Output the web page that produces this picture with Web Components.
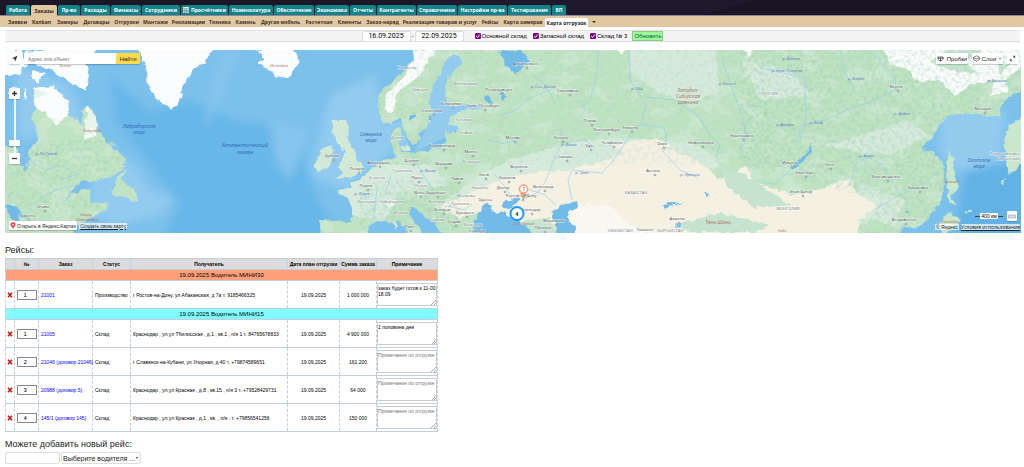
<!DOCTYPE html>
<html lang="ru">
<head>
<meta charset="utf-8">
<title>Карта отгрузок</title>
<style>
html,body{margin:0;background:#fff}
body{font-family:"Liberation Sans",Arial,sans-serif;color:#000}
</style>
</head>
<body>
<shipping-page></shipping-page>
<script>
const define=(name,html,setup)=>{
  const t=document.createElement('template');
  t.innerHTML=html;
  customElements.define(name,class extends HTMLElement{
    connectedCallback(){
      if(this.shadowRoot)return;
      const r=this.attachShadow({mode:'open'});
      r.append(t.content.cloneNode(true));
      if(setup)setup(r,this);
    }
  });
};

/* Main section tabs */
define('main-tabs',`<style>
:host{display:block;background:linear-gradient(165deg,#1c1626 0 40%,#20182d 40% 70%,#1b1424 70%);border-bottom:1px solid #8e8496}
nav{display:flex;gap:1px;padding:5px 6px 0}
a{display:flex;align-items:center;justify-content:center;gap:2px;box-sizing:border-box;height:10px;width:var(--w);border-radius:2px 2px 0 0;background:#108488;color:#fff;font:bold 5px "Open Sans",sans-serif;text-decoration:none;white-space:nowrap}
a.on{background:#e0c8a2;color:#33261c;height:11px;margin-bottom:-1px}
svg{width:6px;height:6px}
</style><nav aria-label="Разделы"></nav>`,r=>{
  const tabs=[['Работа',24],['Заказы',26],['Пр-во',22],['Расходы',29],['Финансы',30],['Сотрудники',38],['Просчётники',47],['Номенклатура',44],['Обеспечение',40],['Экономика',34],['Отчеты',26],['Контрагенты',39],['Справочники',40],['Настройки пр-ва',49],['Тестирование',43],['БП',14]];
  r.querySelector('nav').innerHTML=tabs.map(([t,w],i)=>`<a href="#" style="--w:${w}px" class="${i==1?'on':''}">${i==6?'<svg viewBox="0 0 6 6"><path fill="#dfe9ea" d="M0 0h6v6H0z"/><path stroke="#4d7f84" stroke-width=".5" d="M0 1.7h6M1.8 2v4M3.6 2v4M0 3.5h6M0 4.8h6"/></svg>':''}${t}</a>`).join('');
});

/* Second-level menu */
define('sub-menu',`<style>
:host{display:block;background:#e0c8a2}
nav{display:flex;align-items:center;height:11px;padding:0 6px}
a{display:flex;align-items:center;justify-content:center;box-sizing:border-box;width:var(--w);height:9px;color:#40301f;font:bold 5px "Open Sans",sans-serif;text-decoration:none;white-space:nowrap}
a.on{background:#fff;color:#222;border-radius:2px 2px 0 0;align-self:flex-end}
button{border:0;padding:0;background:none;width:12px;height:9px;display:flex;justify-content:center;align-items:center}
i{border:2px solid transparent;border-top-color:#40301f;border-bottom:0}
</style><nav aria-label="Заказы"></nav>`,r=>{
  const items=[['Заявки',23],['Kanban',25],['Замеры',27],['Договоры',31],['Отгрузки',29],['Монтажи',29],['Рекламации',37],['Техника',26],['Камень',25],['Другая мебель',45],['Расчетная',32],['Клиенты',29],['Заказ-наряд',37],['Реализация товаров и услуг',78],['Рейсы',22],['Карта замеров',44],['Карта отгрузок',43]];
  r.querySelector('nav').innerHTML=items.map(([t,w],i)=>`<a href="#" style="--w:${w}px" class="${i==16?'on':''}">${t}</a>`).join('')+'<button aria-label="Ещё"><i></i></button>';
});

/* Date range and warehouse filter */
define('filter-bar',`<style>
:host{display:block;margin:3px 4px 0 5px}
form{display:flex;align-items:center;justify-content:center;box-sizing:border-box;height:12px;background:#f4f4f4;border-top:1px solid #eee0d8;border-bottom:1px solid #ddd;font:6px "Liberation Sans",sans-serif}
input[type=text]{box-sizing:border-box;width:49px;height:11px;border:1px solid #ddd;border-radius:2px;padding:0;text-align:center;font:7px Roboto,sans-serif;background:#fff}
span{width:4px;text-align:center}
label{display:flex;align-items:center;gap:1px;margin-left:6px}
label:first-of-type{margin-left:11px}
input[type=checkbox]{appearance:none;margin:0;width:6px;height:6px;border-radius:1px;background:#7a0a8a url("data:image/svg+xml,%3Csvg xmlns='http://www.w3.org/2000/svg' viewBox='0 0 6 6'%3E%3Cpath d='M1.2 3.1l1.3 1.3L4.9 1.6' fill='none' stroke='white'/%3E%3C/svg%3E")}
button{height:10px;width:31px;box-sizing:border-box;margin-left:5px;padding:0;border:1px solid #8fc98f;background:#98fb98;font:6px "Liberation Sans",sans-serif;color:#153}
</style><form><input type="text" aria-label="С" value="16.09.2025"><span>-</span><input type="text" aria-label="По" value="22.09.2025">
<label><input type="checkbox" checked>Основной склад</label><label><input type="checkbox" checked>Запасной склад</label><label><input type="checkbox" checked>Склад № 3</label><button type="button">Обновить</button></form>`);

/* Map with its controls; places are drawn in map units */
define('shipping-map',`<style>
:host{display:block;position:relative;margin:8px 3px 0 5px;height:183px;overflow:hidden;background:#7bc0ec;font:5px "Liberation Sans",sans-serif}
.map{display:block;width:100%;height:100%}
.over{position:absolute;display:flex;align-items:center;white-space:nowrap}
button,.box{display:flex;align-items:center;justify-content:center;gap:3px;box-sizing:border-box;border:0;padding:0;margin:0;background:#fff;color:#222;height:11px;font:6px "Liberation Sans",sans-serif;border-radius:1px;box-shadow:0 1px 1px #0003}
.search{left:4px;top:3px}
.search input{box-sizing:border-box;width:92px;height:11px;border:0;margin-left:4px;padding:0 4px;font:5px "Liberation Sans",sans-serif;box-shadow:0 1px 1px #0003}
.search input::placeholder{color:#777;opacity:1}
.search .go{width:24px;background:#ffdb4d}
.sq{width:11px}
.right{right:3px;top:3px;gap:4px}
.zoom{left:4px;top:38px;flex-direction:column}
.rail{width:2px;height:54px;background:#fff;opacity:.85}
.knob{position:absolute;top:52px;width:11px;height:6px;border-radius:1px;background:#fff;box-shadow:0 1px 1px #0003}
.bl{left:4px;bottom:3px;gap:2px}
.bl a,.br a{color:#222}
.bl .box{padding:0 1px;height:9px;gap:1px;font-size:5px;text-decoration:none}
.bl svg{flex:none}
.bl .own,.copy{background:#ffffffb0;padding:0 1px;color:#222}
.scale{right:4px;bottom:12px;gap:4px}
.ruler{display:flex;align-items:center;width:28px}
.ruler:before,.ruler:after{content:"";flex:1;height:1px;background:#444}
.ruler b{font-weight:normal;background:#fff;border-radius:1px;padding:0 1px}
.scale .box{width:10px;height:10px}
.br{right:1px;bottom:3px;gap:2px}
.br .terms{font:5px "Open Sans",sans-serif;background:#ffffffb0}
</style>
<svg class="map" viewBox="5 50 1016 183" preserveAspectRatio="xMidYMid slice" role="img" aria-label="Карта">
<defs>
<filter id="coast" x="-5%" y="-5%" width="110%" height="110%"><feTurbulence type="fractalNoise" baseFrequency=".16" numOctaves="3" seed="4"/><feDisplacementMap in="SourceGraphic" scale="6" xChannelSelector="R" yChannelSelector="G"/></filter>
<filter id="mottle" x="0" y="0" width="100%" height="100%" color-interpolation-filters="sRGB"><feTurbulence type="fractalNoise" baseFrequency=".04 .06" numOctaves="5" seed="11"/><feColorMatrix values="0 0 0 0 .83 0 0 0 0 .92 0 0 0 0 .85 9 0 0 0 -4.6"/></filter>
<filter id="relief" x="0" y="0" width="100%" height="100%" color-interpolation-filters="sRGB"><feTurbulence type="fractalNoise" baseFrequency=".25" numOctaves="3" seed="7" result="n"/><feColorMatrix values="0 0 0 0 .62 0 0 0 0 .8 0 0 0 0 .7 3 0 0 0 -1.3"/><feComposite in2="SourceAlpha" operator="in"/></filter>
<filter id="soft"><feGaussianBlur stdDeviation="4"/></filter>
<path id="eurasia" d="M413 48L414 60L397 78L380 92L379 112L383 122L390 124L400 117L403 125L408 138L413 146L418 143L420 133L427 127L433 113L429 102L432 88L438 78L447 58L453 55L460 55L462 62L450 75L445 88L447 102L450 107L470 104L487 108L463 110L450 117L448 125L458 126L457 134L445 132L445 142L440 148L427 150L417 153L407 152L402 152L398 142L402 134L400 127L392 132L392 145L397 158L383 160L373 167L360 180L350 183L352 188L338 190L340 194L348 198L352 208L352 218L350 222L320 220L322 236H366L370 225L378 221L390 223L397 220L403 227L410 236H425L418 227L410 215L410 208L417 210L427 218L437 225L442 236H898L903 227L917 228L923 223L933 212L942 198L945 178L943 162L933 153L920 148L932 137L945 117L957 113L977 114L987 117L1000 115L1000 108L1010 95L1024 90V46Z"/>
<clipPath id="landclip"><use href="#eurasia"/><path d="M5 145L21 165L29 150L38 140L32 118L34 88L68 103L85 130L88 104L125 158L124 168L82 181L70 192L108 205L72 233H5z"/></clipPath>
</defs>
<path fill="#7cc0ec" d="M0 45h1030v195H0z"/>
<g filter="url(#soft)">
<path fill="#68b7e8" d="M110 75L150 112L190 100L235 120L300 130L305 165L320 205L345 240H160L180 205L150 165L115 120Z"/>
<path fill="#92cbef" d="M100 140L135 165L150 190L175 198L160 215L120 225L85 215ZM330 95L375 75L395 150L345 190L310 175ZM15 65L70 85L85 125L20 140Z"/>
<path fill="#86c5ed" d="M240 50L220 100L205 130L212 80L225 50ZM270 120L310 130L290 180L275 160Z"/>
<path fill="#93cbef" d="M940 110L1005 110L1000 160L965 175L940 155Z"/><path fill="#62b2e6" d="M965 170L1024 160V235H955ZM1012 160h20v80h-60Z"/>
</g>
<path fill="#93cbef" d="M430 50H465V75L450 105H490L450 135L415 152L425 130ZM385 127L402 120L410 150L395 160Z"/>
<g filter="url(#coast)">
<path fill="#c0e3c3" d="M0 145L17 149L21 165L26 172L29 165L30 150L38 140L38 130L32 118L35 108L34 88L53 89L68 103L69 114L83 126L82 112L88 104L93 115L98 130L112 148L125 158L124 168L110 177L95 181L82 181L70 192L60 204L80 189L91 190L90 202L108 204L106 210L90 218L75 228L72 236H0ZM111 197L117 178L126 169L122 180L135 190L138 200L131 202L128 196Z"/>
<path fill="#fafcfd" d="M0 50H20L28 64L18 75L5 76ZM32 70L45 73L37 83L32 79ZM24 52L70 48L90 68L86 91L68 82L52 70L32 64ZM34 88L53 86L68 101L69 113L56 126L45 112L36 109ZM88 104L98 123L96 136L84 139ZM72 48H97L89 63L76 61ZM137 46L145 65L148 84L155 98L172 109L179 103L182 88L193 69L205 62L216 46ZM257 50L264 58L258 63L267 68L275 76L286 78L300 65L298 55L288 46ZM12 87L17 89L14 96L8 93ZM24 88L27 95L24 100Z"/>
<path fill="#d2e9d5" d="M333 120H345L349 128L347 138L353 148L357 160L363 165L361 173L350 178L335 180L343 172L337 167L342 160L345 152L338 145L335 138L331 130ZM322 148L332 145L333 153L330 167L317 172L315 165L318 158ZM393 221L397 220L396 232ZM400 146L410 145L409 151L402 151Z"/>
<use href="#eurasia" fill="#bfe2c2"/>
<path fill="#c8e7cc" d="M949 150L953 158L954 174L959 187L951 195L955 205L948 202L947 165ZM940 226L947 211L960 219L953 228L943 236ZM1024 115L1010 125L1004 140L1006 160L1009 174L1015 170L1024 158ZM965 212L972 208L970 213ZM978 206L984 201ZM1000 182L1006 177L1003 185Z"/>
</g>
<g clip-path="url(#landclip)">
<path filter="url(#mottle)" opacity=".5" d="M0 45h1030v195H0z"/>
<g filter="url(#coast)">
<path fill="#d6eadb" d="M630 50H715L720 90L690 105L655 90L630 70ZM330 190L380 165L430 165L450 185L400 190L385 220L350 215ZM510 160L580 140L640 138L700 145L720 165L680 180L520 180L440 205L480 175ZM740 60L790 70L810 95L760 100ZM850 140L905 120L930 135L890 155L820 145ZM860 185L905 200L895 225L850 215Z"/>
<path fill="#f4f0e2" d="M436 205L455 200L483 188L500 179L533 173L567 170L598 163L617 155L643 147L673 149L700 162L718 178L733 174L745 165L755 182L793 195L820 190L850 178L857 193L877 205L860 220L857 240H560L550 217L520 222L480 212L460 218ZM610 145L655 138L670 145L630 155Z"/>
<path fill="#faf7f0" d="M570 205L610 205L630 225L660 236H570Z"/>
<path fill="#c5e3ce" d="M515 222L540 220L560 236H530ZM675 225L720 213L770 225L755 232H690ZM718 166L745 174L790 205L755 208L730 190Z"/>
<path fill="#fafcfc" d="M412 50H435L420 75L398 92L392 113L386 111L385 95L405 77ZM885 48H1024V65L1005 80L1008 92L990 96L995 80L970 84L955 97L940 80L920 82L905 68L890 65ZM615 48H628L622 54ZM740 48L752 50L749 57ZM385 204L397 201L394 207Z"/>
<path fill="#c7e4cf" d="M948 50L985 48L965 62L980 74L950 70L930 62ZM995 60L1010 64L1000 74Z"/>
</g>
<path filter="url(#relief)" opacity=".4" d="M740 45h290v195H860L880 200L740 165ZM360 180h100v50h-100ZM5 140h125v90H5z"/>
<path filter="url(#relief)" opacity=".2" d="M370 45h400v120H370z"/>
</g>
<g filter="url(#coast)" fill="#72bbe9">
<path d="M473 236L474 222L480 212L484 204L492 203L490 209L497 214L504 211L512 217L522 224L531 231V236ZM502 208L503 202L521 197L517 204L509 209ZM552 212L562 204L577 201L578 208L568 212L568 222L576 227L574 236H558L555 222ZM812 142L811 152L800 165L790 171L796 162L808 152ZM500 52L522 50L530 62L515 73L505 65ZM484 94L490 97L494 104L487 103ZM499 90L507 96L503 101ZM662 206L668 203L685 203L668 206L665 210ZM704 191L710 194L706 196ZM675 224L682 223L678 227ZM5 204L16 207L28 218L18 216L22 225L10 218ZM430 114L432 120L427 121ZM411 114L417 115L410 121ZM905 210L910 212L906 214Z"/>
</g>
<g fill="none" stroke="#9bcfe6" stroke-width=".7" stroke-linejoin="round">
<path d="M629 50L630 80L640 95L646 105L642 123L633 130L622 148L612 162L602 173L572 170L568 180L572 200M646 97L675 100L700 118L708 132L720 145L716 158M640 124L664 128L667 138L662 150L680 170L698 178M500 115L515 111L530 98L550 90M561 130L563 142L556 155L545 182L538 192L522 200M563 143L585 140L595 148M525 188L545 195L556 205M532 73L545 85L553 98M722 60L728 78L740 110L745 130L740 150M873 50L882 65L895 77L896 90L875 100L845 111L825 120L801 126L796 143M790 170L775 184L763 183M760 68L805 78L806 115L800 140M850 185L855 165L868 157L882 165L890 178L900 195L920 185L938 172M876 209L900 195M441 100L447 115M391 175L385 195M377 190L373 220M411 154L425 178L434 190M448 206L465 210L472 204M488 140L505 144L520 138M495 175L507 189L513 202M840 50L845 75L855 88M20 155L45 170L60 165M30 205L55 190L72 186M60 180L78 174M598 50L597 75L590 100L580 108M580 100L585 110L578 120"/>
</g>
<style>text{font-family:"Open Sans",sans-serif;font-size:4px;text-anchor:middle;fill:#3c4148;paint-order:stroke;stroke:#fff9;stroke-width:1px}.c{fill:#757b84}.w{fill:#2f66b5;font-style:italic;stroke:none}.r{fill:#ad7264;font-style:italic;stroke:none}.v{fill:#5a72c8;font-style:italic;stroke:none}</style>
<g id="labels"></g>
<g id="dots" fill="#fff" stroke="#6b747c" stroke-width=".6"></g>
<g fill="none" stroke="#909090" stroke-width="2"><path d="M523 198l3-4"/></g>
<path fill="#ff9c78" d="M523 199l-3-6h5z"/><circle cx="523.500" cy="189" r="4" fill="#fff" stroke="#ff9c78" stroke-width="1.500"/><text x="524" y="191" style="font-size:5px;fill:#222">1</text>
<circle cx="517" cy="213.500" r="6.500" fill="#fff" stroke="#1e98ff" stroke-width="2"/><text x="517" y="215.500" style="font-size:5px;font-weight:bold;fill:#222">4</text>
</svg>
<div class="over search"><button class="sq" aria-label="Моё местоположение"><svg width="7" height="7" viewBox="0 0 7 7"><path fill="#333" d="M6.500 .8L.8 3.200L3.400 3.800L4.200 6.500z"/></svg></button><input type="text" aria-label="Адрес или объект" placeholder="Адрес или объект"><button class="go">Найти</button></div>
<div class="over right"><button style="width:32px"><svg width="7" height="6" viewBox="0 0 7 6"><path fill="#fff" stroke="#555" stroke-width=".8" d="M1 1h5v2.500L3.500 5.200L1 3.500z"/><path stroke="#555" d="M.5 2h6M3.500 2v3"/></svg>Пробки</button><button style="width:31px;gap:2px"><svg width="7" height="7" viewBox="0 0 7 7"><path fill="#fff" stroke="#444" stroke-width=".7" d="M3.500 .8L6.500 2.500L3.500 4L.5 2.500zM.5 2.500v2l3 1.800l3-1.800v-2"/></svg>Слои<svg width="4" height="3" viewBox="0 0 4 3"><path fill="none" stroke="#555" stroke-width=".7" d="M.4 .5L2 2.200L3.600 .5"/></svg></button><button class="sq" aria-label="На весь экран"><svg width="7" height="7" viewBox="0 0 7 7"><path fill="#444" d="M3.800 .8h2.400v2.400zM.8 3.800v2.400h2.400z"/><path stroke="#444" stroke-width=".7" d="M5.500 1.500L4 3M3 4L1.500 5.500"/></svg></button></div>
<div class="over zoom"><button class="sq" aria-label="Приблизить"><svg width="7" height="7" viewBox="0 0 7 7"><path stroke="#333" stroke-width="1.300" d="M1 3.500h5M3.500 1v5"/></svg></button><div class="rail"></div><div class="knob"></div><button class="sq" aria-label="Отдалить"><svg width="7" height="7" viewBox="0 0 7 7"><path stroke="#333" stroke-width="1.300" d="M1 3.500h5"/></svg></button></div>
<div class="over bl"><a class="box" href="#"><svg width="6" height="7" viewBox="0 0 6 7"><path fill="#f33" d="M3 7C2.800 5 .5 4.600 .5 2.700a2.500 2.500 0 0 1 5 0C5.500 4.600 3.200 5 3 7"/><circle cx="3" cy="2.700" r=".9" fill="#fff"/></svg>Открыть в Яндекс.Картах</a><a class="own" href="#">Создать свою карту</a></div>
<div class="over scale"><div class="ruler"><b>400 км</b></div><button class="box" aria-label="Линейка"><svg width="8" height="5" viewBox="0 0 8 5"><path fill="#ddd" stroke="#999" stroke-width=".6" d="M.5 1h7v3h-7z"/></svg></button></div>
<div class="over br"><span class="copy">© Яндекс</span><a class="terms" href="#">Условия использования</a></div>`,r=>{
  const places=[['Отава',43,208],['Торонто',27,217],['Дублин',332,157],['Лондон',357,170],['Амстердам',378,164],['Париж',366,187],['Берлин',412,162],['Прага',417,179],['Варшава',444,165],['Вена',419,194],['Будапешт',436,194],['Белград',442,211],['София',454,223],['Бухарест',465,214],['Рим',409,228],['Стокгольм',432,112],['Хельсинки',451,105],['Санкт-Петербург',483,107],['Калининград',442,147],['Минск',471,153],['Киев',484,176],['Львов',457,180],['Одесса',485,201],['Стамбул',477,232],['Петрозаводск',499,91],['Архангельск',525,65],['Сыктывкар',568,92],['Москва',513,139],['Казань',561,139],['Пермь',590,122],['Екатеринбург',607,131],['Тюмень',630,129],['Уфа',589,147],['Челябинск',612,144],['Самара',565,158],['Воронеж',519,168],['Харьков',507,179],['Днепр',503,189],['Ростов-на-Дону',521,197],['Волгоград',543,188],['Краснодар',530,211],['Махачкала',554,222],['Тбилиси',543,229],['Омск',662,145],['Новосибирск',701,144],['Красноярск',742,137],['Астана',653,172],['Алматы',677,220],['Ташкент',645,231],['Иркутск',790,164],['Улан-Удэ',804,174],['Чита',829,166],['Улан-Батор',801,193],['Якутск',896,88],['Благовещенск',886,178],['Хабаровск',918,189],['Владивосток',904,221],['Магадан',983,110]];
  const other=['c Норвегия 407 69','c Швеция 420 91','c Финляндия 465 85','c Эстония 463 121','c Латвия 465 134','c Дания 397 139','c Беларусь 472 163','c Германия 402 172','c Бельгия 377 179','c Чехия 421 187','c Венгрия 437 203','c Франция 366 203','c Швейцария 392 203','c Италия 401 214','c Украина 480 189','c Молдова 466 197','c Румыния 460 205','c Болгария 473 226','c Сербия 437 221','c КАЗАХСТАН 636 194','c УЗБЕКИСТАН 620 232','c КЫРГЫЗСТАН 670 232','c РОССИЯ 770 95','c МОНГОЛИЯ 788 210','c Петропавловск- 1005 155','c Камчатский 1008 160','r Земля 65 67','r Исландия 279 67','r Лабрадор 92 132','r Новая 86 216','r Шотландия 87 221','r Сахалин 951 183','r Хоккайдо 950 223','r Гоби 782 232','r Сев._Кавказ 524 225','v р._Ла-Гранд 46 155','v р._Лена 816 124','v р._Алдан 902 115','v р._Амур 866 157','v р._Вилюй 856 80','v р._Витим 791 60','v р._Ангара 785 126','v р._Ниж._Тунгуска 787 72','v р._Иртыш 690 176','v р._Обь 637 90','v р._Урал 582 174','v р._Волга 569 146','v р._Висла 428 172','v р._Енисей 727 85','v р._Колыма 997 82','v р._Сев._Двина 543 88','v р._Луара 362 195'];
  let h='',d='';
  for(const [n,x,y] of places){h+=`<text x="${x}" y="${y}">${n}</text>`;d+=`<circle cx="${x+2}" cy="${y+3}" r=".9"/>`}
  for(const s of other){const [c,n,x,y]=s.split(' ');h+=`<text class="${c}" x="${x}" y="${y}">${n.replace(/_/g,' ')}</text>`}
  const big=(t,x,y,s,c='w')=>`<text class="${c}" x="${x}" y="${y}" style="font-size:${s}px">${t}</text>`;
  h+=big('Лабрадорское',139,128,5)+big('море',139,134,5)+big('Атлантический',245,147,6)+big('океан',245,154,6)+big('Северное',371,136,5)+big('море',371,142,5)+big('Охотское',979,162,5)+big('море',979,168,5)+big('Западно-',688,92,5,'r')+big('Сибирская',688,98,5,'r')+big('равнина',688,104,5,'r')+big('Тянь-Шань',718,224,5,'r');
  r.querySelector('#labels').innerHTML=h;
  r.querySelector('#dots').innerHTML=d;
});

/* Trips and their orders */
define('trips-table',`<style>
:host{display:block;width:432px}
table{width:100%;table-layout:fixed;border-collapse:collapse;font-size:5px}
th,td{padding:0;border:1px dashed #c3ced8;border-top:1px solid #c3ced8;border-bottom:1px solid #c3ced8;text-align:center;white-space:nowrap}
th{height:10px;background:#dcdcdc;font-weight:bold;font-size:5px}
.group td{height:10px;font-size:6px}
.group.a td{background:#ffa07a}.group.b td{background:#7fffff}
.row td{height:27px}
.row .l{text-align:left;padding-left:2px}
.num{box-sizing:border-box;width:20px;height:10px;border:1px solid #888;padding:0 6px;font:6px "Liberation Sans",sans-serif;display:block;margin:0 auto}
.del{display:block;margin:auto;border:0;padding:0;background:none;width:6px;height:6px}
.del svg{display:block}
a{color:#00f;text-decoration:none}
textarea{display:block;box-sizing:border-box;width:60px;height:23px;margin:0;border:1px solid #ccc;padding:1px 0;font:5px/6px "Liberation Sans",sans-serif;white-space:pre;resize:none;overflow:hidden;background:#fff linear-gradient(135deg,transparent 0 50%,#aaa 50% 60%,transparent 60% 75%,#aaa 75% 85%,transparent 85%) no-repeat right 0 bottom 0/5px 5px}
textarea::placeholder{color:#777;opacity:1;white-space:pre}
</style><table><colgroup><col style="width:9px"><col style="width:24px"><col style="width:54px"><col style="width:38px"><col style="width:157px"><col style="width:52px"><col style="width:37px"><col style="width:61px"></colgroup>
<thead><tr><th></th><th>№</th><th>Заказ</th><th>Статус</th><th>Получатель</th><th>Дата план отгрузки</th><th>Сумма заказа</th><th>Примечание</th></tr></thead><tbody></tbody></table>`,r=>{
  const rows=[['a','МИНИ30'],[1,'21001','Производство','г Ростов-на-Дону, ул Абаканская, д 7а т. 9185466325','1 000 000','заказ будет готов к 11-00\n18.09'],['b','МИНИ15'],[1,'21005','Склад','Краснодар , ул.ул Тбилисская , д.1 , кв.1 , п/я 1 т. 84765678833','4 900 000','1 половина дня'],[2,'21046 (договор 21046)','Склад','г Славянск-на-Кубани, ул Упорная, д 40 т. +79874589651','161 200',''],[3,'20988 (договор 5)','Склад','Краснодар , ул.ул Красная , д.8 , кв.15 , п/я 3 т. +79528429731','64 000',''],[4,'145/1 (договор 145)','Склад','Краснодар , ул.ул Красная , д.1 , кв. , п/я . т. +79856541256','150 000','']];
  r.querySelector('tbody').innerHTML=rows.map(x=>x.length==2?`<tr class="group ${x[0]}"><td colspan="8">19.09.2025 Водитель ${x[1]}</td></tr>`:`<tr class="row"><td><button class="del" aria-label="Удалить"><svg width="6" height="6" viewBox="0 0 6 6"><path stroke="#c41a1a" stroke-width="1.700" d="M1 .8L5 5.200M5 .8L1 5.200"/></svg></button></td><td><input class="num" type="text" aria-label="Номер" value="${x[0]}"></td><td class="l"><a href="#">${x[1]}</a></td><td class="l">${x[2]}</td><td class="l">${x[3]}</td><td>19.09.2025</td><td>${x[4]}</td><td><textarea aria-label="Примечание" placeholder="Примечание по отгрузке">${x[5]}</textarea></td></tr>`).join('');
});

/* New trip form */
define('new-trip',`<style>
:host{display:block}
form{display:flex;align-items:flex-start;gap:1px}
input,select{display:block;box-sizing:border-box;height:12px;border:1px solid #ddd;border-radius:2px;background:#fff;margin:0;padding:0 1px;font:7px "Liberation Sans",sans-serif;color:#222}
input{width:55px}
.pick{position:relative}
select{appearance:none;width:80px}
i{position:absolute;right:3px;top:5px;border:1px solid transparent;border-top:2px solid #333;border-bottom:0}
</style><form><input type="text" aria-label="Рейс"><div class="pick"><select aria-label="Водитель"><option>Выберите водителя ...</option></select><i></i></div></form>`);

define('shipping-page',`<style>
:host{display:block}
section{padding:0 5px}
h2{margin:0;font:normal 9px/12px "Liberation Sans",sans-serif;color:#222}
.trips{padding-top:11px}
.trips h2{margin-bottom:2px}
.new{padding-top:6px}
.new h2{margin-bottom:2px}
</style><header><main-tabs></main-tabs><sub-menu></sub-menu></header><main><filter-bar></filter-bar><shipping-map></shipping-map><section class="trips"><h2>Рейсы:</h2><trips-table></trips-table></section><section class="new"><h2>Можете добавить новый рейс:</h2><new-trip></new-trip></section></main>`);
</script>
</body>
</html>
